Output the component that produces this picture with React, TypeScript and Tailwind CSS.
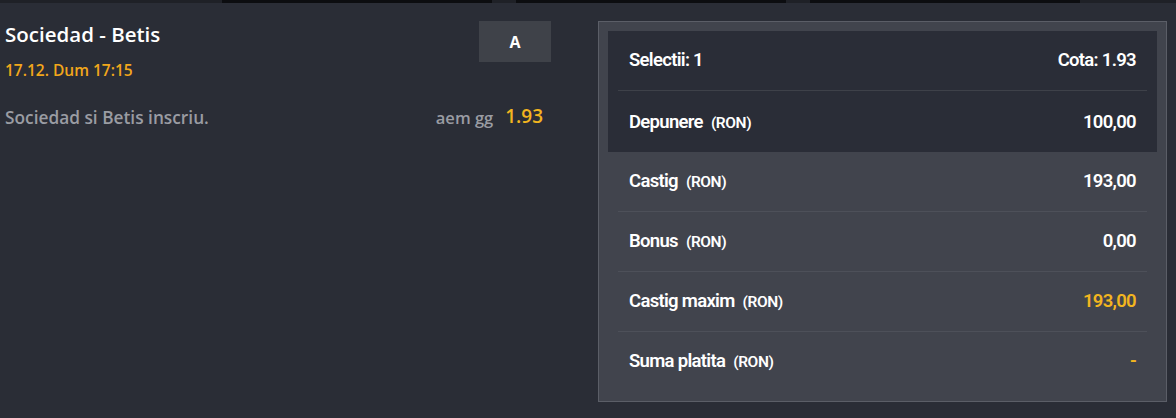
import React from "react";

const rows = [
  { label: "Castig", value: "193,00", yellow: false },
  { label: "Bonus", value: "0,00", yellow: false },
  { label: "Castig maxim", value: "193,00", yellow: true },
  { label: "Suma platita", value: "-", yellow: true },
];

const cond = { fontFamily: '"Roboto", "Liberation Sans", sans-serif' };

function Label({ text }: { text: string }) {
  return (
    <span className="text-[18.5px] text-white font-semibold tracking-[-0.7px]">
      {text}
      <span className="text-[15.5px] ml-[8px] tracking-[-0.4px]">(RON)</span>
    </span>
  );
}

export default function App() {
  return (
    <div
      className="w-[1176px] h-[418px] bg-[#2a2d36] overflow-hidden"
      style={{ fontFamily: '"Open Sans", "Liberation Sans", sans-serif' }}
    >
      <div className="h-[3px] bg-[#1f2127] flex pl-[222px] gap-[24px]">
        <div className="w-[270px] h-full bg-[#0c0d10]" />
        <div className="w-[270px] h-full bg-[#0c0d10]" />
        <div className="w-[270px] h-full bg-[#0c0d10]" />
      </div>
      <div className="flex pt-[18px]">
        <div className="w-[551px] pl-[5px] flex flex-col">
          <div className="flex justify-between items-start">
            <div className="flex flex-col">
              <div className="text-[20.5px] leading-[28px] -mt-[1px] font-semibold text-white">Sociedad - Betis</div>
              <div className="text-[15.5px] leading-[20px] mt-[12px] font-semibold text-[#f2a71b]">17.12. Dum 17:15</div>
            </div>
            <div className="w-[72px] h-[41px] bg-[#3f4249] flex items-center justify-center text-white font-bold text-[16px]">
              A
            </div>
          </div>
          <div className="flex justify-between items-center mt-[25px] pr-[8px]">
            <span className="text-[17.3px] font-semibold text-[#9a9ca3]">Sociedad si Betis inscriu.</span>
            <span className="flex items-center gap-[12px]">
              <span className="text-[16.5px] font-semibold text-[#9a9ca3]">aem gg</span>
              <span className="text-[19px] font-semibold text-[#f2b51f] -mt-[3px]">1.93</span>
            </span>
          </div>
        </div>
        <div
          className="ml-[47px] w-[569px] border border-[#5b5e67] bg-[#41444d] p-[9px]"
          style={cond}
        >
          <div className="bg-[#2a2d37] px-[10px]">
            <div className="h-[60px] flex items-center justify-between px-[11px] border-b border-[#3e4149]">
              <span className="text-[18.5px] text-white font-semibold tracking-[-0.7px]">Selectii: 1</span>
              <span className="text-[18.5px] text-white font-semibold tracking-[-0.7px]">Cota: 1.93</span>
            </div>
            <div className="h-[61px] flex items-center justify-between px-[11px] pt-[3px]">
              <Label text="Depunere" />
              <span className="text-[18.5px] text-white font-semibold tracking-[-0.7px]">100,00</span>
            </div>
          </div>
          <div className="px-[10px]">
            {rows.map((r, i) => (
              <div
                key={r.label}
                className={
                  "h-[60px] flex items-center justify-between px-[11px] " +
                  (i < rows.length - 1 ? "border-b border-[#4d5059]" : "")
                }
              >
                <Label text={r.label} />
                <span
                  className={
                    "text-[18.5px] font-semibold tracking-[-0.7px] " + (r.yellow ? "text-[#f2b51f]" : "text-white")
                  }
                >
                  {r.value}
                </span>
              </div>
            ))}
          </div>
        </div>
      </div>
    </div>
  );
}
